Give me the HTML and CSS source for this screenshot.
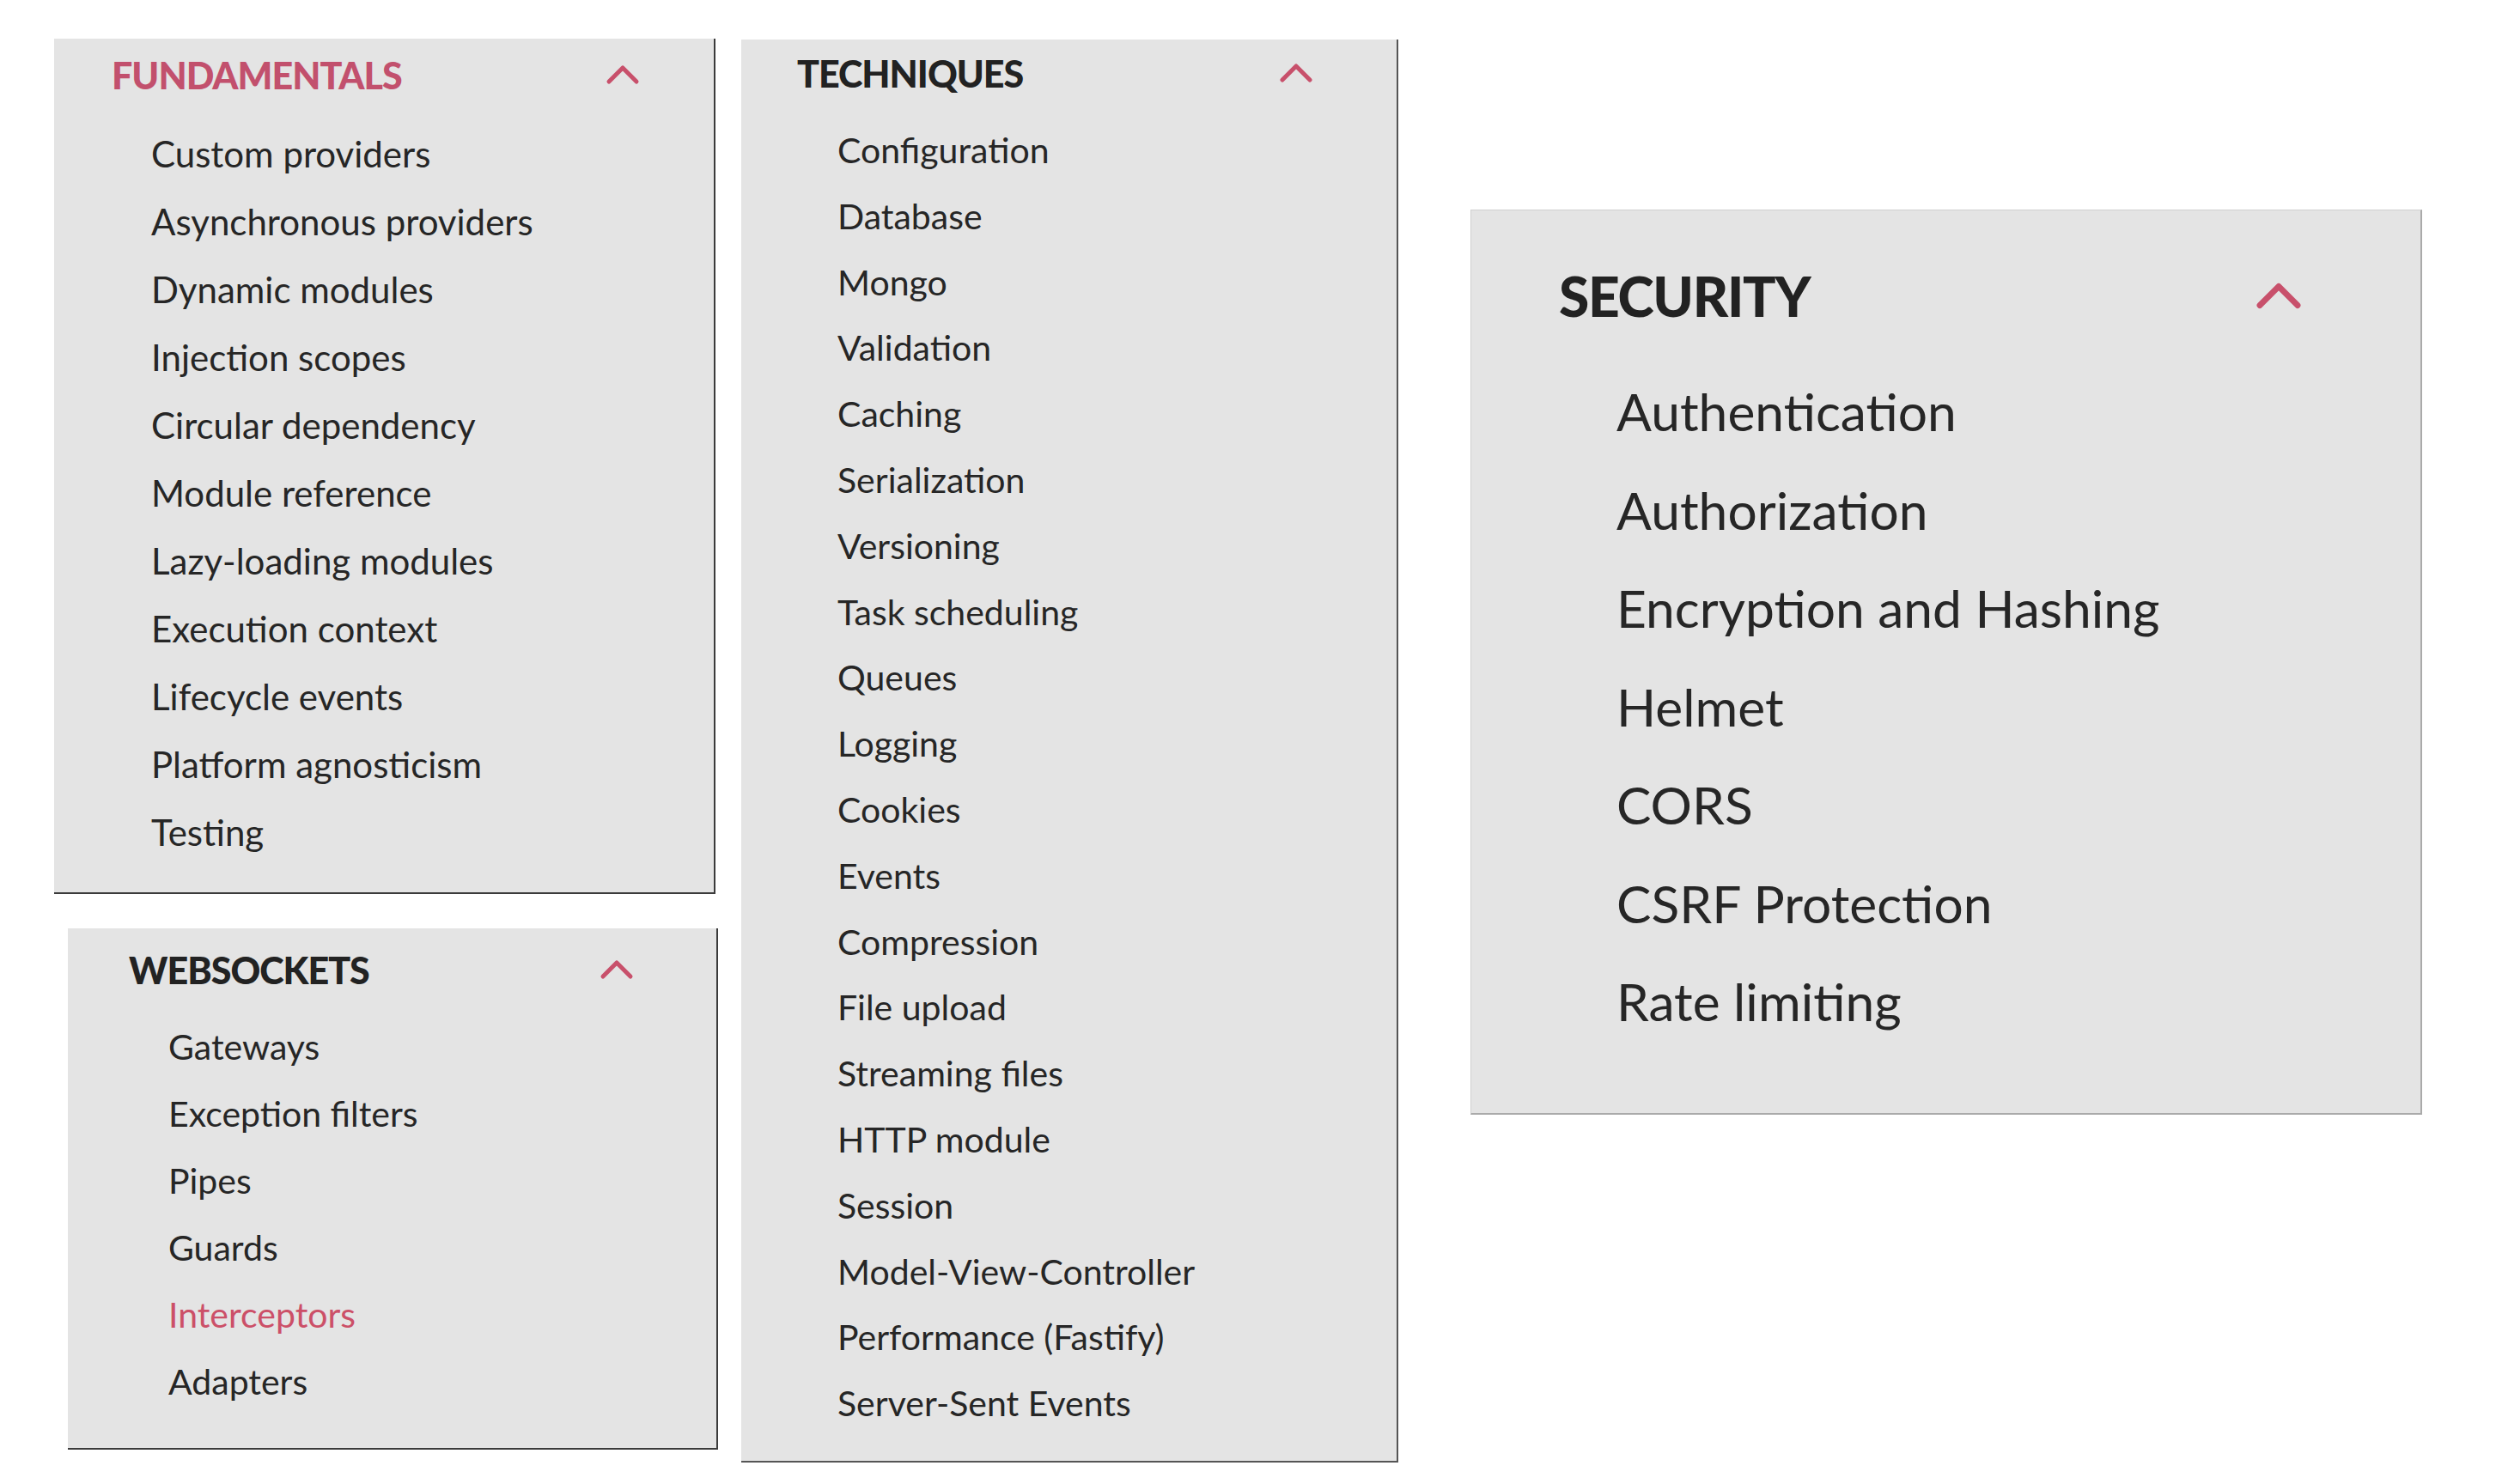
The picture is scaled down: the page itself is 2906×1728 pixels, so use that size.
FILE: index.html
```html
<!DOCTYPE html>
<html lang="en">
<head>
  <meta charset="UTF-8">
  <title>Docs menu</title>
  <link rel="stylesheet" href="styles.css">
</head>
<body>

<div class="canvas">

  <!-- Columna izquierda: Fundamentals + Websockets -->
  <div class="col col-left">
    <div class="menu menu-fundamentals">
      <div class="menu-head is-open">
        <span class="menu-title">FUNDAMENTALS</span>
        <svg class="chevron" viewBox="0 0 40 24"><polyline points="4,20 20,4 36,20"/></svg>
      </div>
      <ul class="menu-list">
        <li>Custom providers</li>
        <li>Asynchronous providers</li>
        <li>Dynamic modules</li>
        <li>Injection scopes</li>
        <li>Circular dependency</li>
        <li>Module reference</li>
        <li>Lazy-loading modules</li>
        <li>Execution context</li>
        <li>Lifecycle events</li>
        <li>Platform agnosticism</li>
        <li>Testing</li>
      </ul>
    </div>

    <div class="menu menu-websockets">
      <div class="menu-head">
        <span class="menu-title">WEBSOCKETS</span>
        <svg class="chevron" viewBox="0 0 40 24"><polyline points="4,20 20,4 36,20"/></svg>
      </div>
      <ul class="menu-list">
        <li>Gateways</li>
        <li>Exception filters</li>
        <li>Pipes</li>
        <li>Guards</li>
        <li class="active">Interceptors</li>
        <li>Adapters</li>
      </ul>
    </div>
  </div>

  <!-- Columna central: Techniques -->
  <div class="col col-mid">
    <div class="menu menu-techniques">
      <div class="menu-head">
        <span class="menu-title">TECHNIQUES</span>
        <svg class="chevron" viewBox="0 0 40 24"><polyline points="4,20 20,4 36,20"/></svg>
      </div>
      <ul class="menu-list">
        <li>Configuration</li>
        <li>Database</li>
        <li>Mongo</li>
        <li>Validation</li>
        <li>Caching</li>
        <li>Serialization</li>
        <li>Versioning</li>
        <li>Task scheduling</li>
        <li>Queues</li>
        <li>Logging</li>
        <li>Cookies</li>
        <li>Events</li>
        <li>Compression</li>
        <li>File upload</li>
        <li>Streaming files</li>
        <li>HTTP module</li>
        <li>Session</li>
        <li>Model-View-Controller</li>
        <li>Performance (Fastify)</li>
        <li>Server-Sent Events</li>
      </ul>
    </div>
  </div>

  <!-- Columna derecha: Security (más grande) -->
  <div class="col col-right">
    <div class="menu menu-security">
      <div class="menu-head">
        <span class="menu-title">SECURITY</span>
        <svg class="chevron" viewBox="0 0 40 24"><polyline points="4,20 20,4 36,20"/></svg>
      </div>
      <ul class="menu-list">
        <li>Authentication</li>
        <li>Authorization</li>
        <li>Encryption and Hashing</li>
        <li>Helmet</li>
        <li>CORS</li>
        <li>CSRF Protection</li>
        <li>Rate limiting</li>
      </ul>
    </div>
  </div>

</div>

</body>
</html>
```

FILE: styles.css
```css
body {
  margin: 0;
  background-color: #fff;
  font-family: Lato, "Open Sans", sans-serif;
  color: #262626;
}

.canvas {
  display: flex;
  align-items: flex-start;
  padding: 45px 0 0 63px;
}

.col {
  display: flex;
  flex-direction: column;
  align-items: flex-start;
}

.col-mid {
  margin-left: 27px;
  margin-top: 1px;
}

.col-right {
  margin-left: 84px;
  margin-top: 199px;
}

/* Panel gris de cada sección */
.menu {
  box-sizing: border-box;
  background-color: #e4e4e4;
  border-right: 2px solid #3b3b3b;
  border-bottom: 2px solid #3b3b3b;
}

.menu-head {
  display: flex;
  justify-content: space-between;
  align-items: center;
  height: 60px;
}

.menu-title {
  font-size: 43px;
  font-weight: 900;
  letter-spacing: -1px;
  color: #222;
}

.menu-head.is-open .menu-title {
  color: #c2506d;
}

.chevron {
  width: 40px;
  height: 24px;
  fill: none;
  stroke: #c8506b;
  stroke-width: 5;
  stroke-linecap: round;
  stroke-linejoin: round;
}

.menu-list {
  list-style: none;
  margin: 0;
  padding: 0;
  font-size: 41px;
}

.menu-list li {
  cursor: pointer;
}

.menu-list li.active {
  color: #cc5068;
}

/* Medidas de cada panel */
.menu-fundamentals {
  width: 770px;
  padding: 12px 86px 30px 67px;
}

.menu-fundamentals .menu-list {
  margin-top: 23px;
  padding-left: 46px;
  line-height: 79px;
  font-size: 42px;
}

.menu-websockets {
  width: 757px;
  margin-top: 40px;
  margin-left: 16px;
  padding: 18px 96px 38px 71px;
}

.menu-websockets .menu-list {
  margin-top: 21px;
  padding-left: 46px;
  line-height: 78px;
}

.menu-techniques {
  width: 765px;
  padding: 9px 97px 28px 65px;
  border-color: #555;
}

.menu-techniques .menu-list {
  margin-top: 22px;
  padding-left: 47px;
  line-height: 76.8px;
}

.menu-security {
  width: 1108px;
  padding: 59px 137px 72px 102px;
  border: 1px solid #cfcfcf;
  border-right: 2px solid #aaa;
  border-bottom: 2px solid #aaa;
}

.menu-security .menu-head {
  height: 80px;
}

.menu-security .menu-title {
  font-size: 64px;
  letter-spacing: -1.3px;
}

.menu-security .chevron {
  width: 56px;
  height: 33px;
}

.menu-security .menu-list {
  margin-top: 38px;
  padding-left: 67px;
  line-height: 114.5px;
  font-size: 60.5px;
}
```
